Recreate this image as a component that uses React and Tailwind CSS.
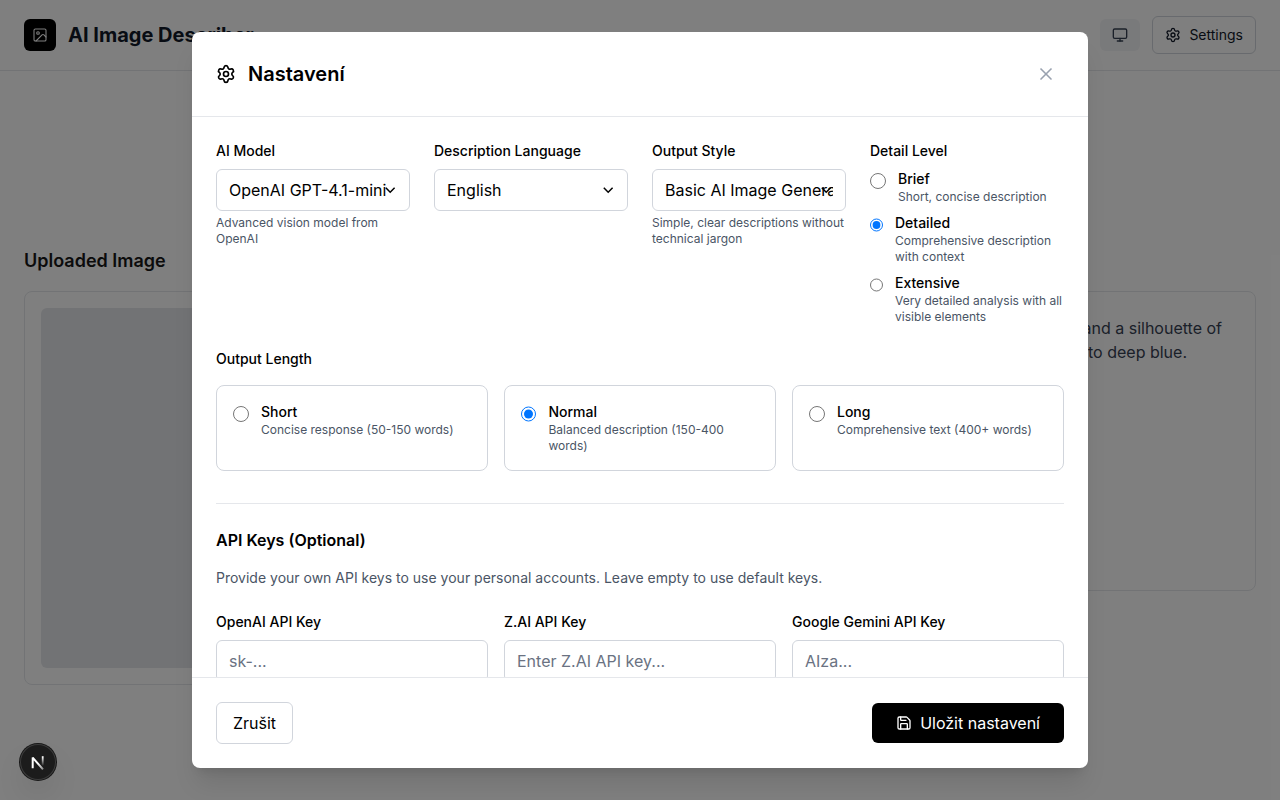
import React from "react";
import { Image, Monitor, Save, Settings, X } from "lucide-react";

const detailLevels = [
  { name: "Brief", text: "Short, concise description" },
  { name: "Detailed", text: "Comprehensive description with context", checked: true },
  { name: "Extensive", text: "Very detailed analysis with all visible elements" },
];

const lengths = [
  { name: "Short", text: "Concise response (50-150 words)" },
  { name: "Normal", text: "Balanced description (150-400 words)", checked: true },
  { name: "Long", text: "Comprehensive text (400+ words)" },
];

const keys = [
  { name: "OpenAI API Key", hint: "sk-..." },
  { name: "Z.AI API Key", hint: "Enter Z.AI API key..." },
  { name: "Google Gemini API Key", hint: "AIza..." },
];

function SelectField({ label, value, hint }) {
  return (
    <div>
      <label className="mb-2 block text-sm font-medium">{label}</label>
      <div className="relative">
        <select className="block h-[42px] w-full appearance-none rounded-md border border-gray-300 bg-white px-3 py-2 text-base">
          <option>{value}</option>
        </select>
        <svg className="pointer-events-none absolute top-[18px] right-[14px] h-[7px] w-[11px]" viewBox="0 0 11 7" fill="none">
          <path d="M0.8 0.8l4.4 4.4L9.6 0.8" stroke="#000" strokeWidth="1.5" />
        </svg>
      </div>
      {hint && <p className="mt-1 text-xs text-gray-600">{hint}</p>}
    </div>
  );
}

function RadioOption({ group, item }) {
  return (
    <>
      <input type="radio" name={group} defaultChecked={item.checked} className="mt-1 h-4 w-4" />
      <div>
        <div className="text-sm font-medium">{item.name}</div>
        <div className="text-xs text-gray-600">{item.text}</div>
      </div>
    </>
  );
}

function Page() {
  return (
    <div className="h-full bg-white">
      <header className="flex items-center justify-between border-b border-gray-200 px-6 py-4">
        <div className="flex items-center gap-3">
          <div className="flex h-8 w-8 items-center justify-center rounded-md bg-black text-white">
            <Image className="h-4 w-4" strokeWidth={1.6} />
          </div>
          <h1 className="text-xl font-bold text-gray-900">AI Image Describer</h1>
        </div>
        <div className="flex items-center gap-3">
          <button className="rounded-md bg-gray-100 px-3 py-2 text-gray-700">
            <Monitor className="h-4 w-4" />
          </button>
          <button className="flex items-center gap-2 rounded-md border border-gray-300 px-3 py-2 text-sm text-gray-900">
            <Settings className="h-4 w-4" />
            Settings
          </button>
        </div>
      </header>
      <main className="grid grid-cols-2 items-start gap-8 px-6 pt-[176px]">
        <section>
          <h2 className="mb-4 text-lg font-semibold text-[#171717]">Uploaded Image</h2>
          <div className="rounded-lg border border-gray-200 p-4">
            <div className="h-[360px] rounded-md bg-gray-200" />
          </div>
        </section>
        <section className="pt-11">
          <div className="flex h-[300px] flex-col items-end rounded-lg border border-gray-200 p-6 whitespace-nowrap text-gray-700">
            <p className="mr-[9px]">and a silhouette of</p>
            <p className="mr-[44px]">to deep blue.</p>
          </div>
        </section>
      </main>
    </div>
  );
}

function DevBadge() {
  return (
    <div className="absolute bottom-5 left-5 flex h-9 w-9 items-center justify-center rounded-full bg-[#1c1c1c] shadow-[0_0_0_1px_#171717,inset_0_0_0_1px_#3c3c3c,0_16px_32px_-8px_rgba(0,0,0,0.24)]">
      <svg className="h-9 w-9" viewBox="0 0 36 36" fill="none">
        <defs>
          <linearGradient id="stem" x1="0" y1="13" x2="0" y2="22" gradientUnits="userSpaceOnUse">
            <stop stopColor="#fff" />
            <stop offset="1" stopColor="#fff" stopOpacity="0" />
          </linearGradient>
          <linearGradient id="diag" x1="19" y1="19" x2="25" y2="27" gradientUnits="userSpaceOnUse">
            <stop stopColor="#fff" />
            <stop offset="1" stopColor="#fff" stopOpacity="0.3" />
          </linearGradient>
        </defs>
        <path d="M12.7 24.3V13.6L23 25.4" stroke="url(#diag)" strokeWidth="2" strokeLinejoin="bevel" />
        <path d="M22.7 12.2v9.4" stroke="url(#stem)" strokeWidth="1.8" />
      </svg>
    </div>
  );
}

export default function App() {
  return (
    <div className="relative h-[800px] w-full overflow-hidden bg-white font-['Inter',sans-serif] text-black antialiased">
      <Page />
      <div className="absolute inset-0 flex items-center justify-center bg-black/50">
        <div className="flex h-[736px] w-[896px] flex-col overflow-hidden rounded-lg bg-white shadow-xl">
          <div className="flex shrink-0 items-center justify-between border-b border-gray-200 p-6">
            <div className="flex items-center gap-3">
              <Settings className="h-5 w-5" />
              <h2 className="text-xl font-semibold">Nastavení</h2>
            </div>
            <button className="p-2 text-gray-400">
              <X className="h-5 w-5" />
            </button>
          </div>

          <div className="min-h-0 flex-1 overflow-hidden p-6">
            <div className="grid grid-cols-4 gap-6">
              <SelectField label="AI Model" value="OpenAI GPT-4.1-mini" hint="Advanced vision model from OpenAI" />
              <SelectField label="Description Language" value="English" />
              <SelectField label="Output Style" value="Basic AI Image Generator" hint="Simple, clear descriptions without technical jargon" />
              <div>
                <div className="mb-2 text-sm font-medium">Detail Level</div>
                <div className="space-y-2">
                  {detailLevels.map((item) => (
                    <label key={item.name} className="flex items-start gap-3">
                      <RadioOption group="detail" item={item} />
                    </label>
                  ))}
                </div>
              </div>
            </div>

            <div className="mt-6">
              <div className="mb-4 text-sm font-medium">Output Length</div>
              <div className="grid grid-cols-3 gap-4">
                {lengths.map((item) => (
                  <label key={item.name} className="flex items-start gap-3 rounded-lg border border-gray-300 p-4">
                    <RadioOption group="length" item={item} />
                  </label>
                ))}
              </div>
            </div>

            <div className="mt-8 border-t border-gray-200 pt-6">
              <h3 className="mb-4 text-base font-semibold">API Keys (Optional)</h3>
              <p className="mb-6 text-sm text-gray-600">
                Provide your own API keys to use your personal accounts. Leave empty to use default keys.
              </p>
              <div className="grid grid-cols-3 gap-4">
                {keys.map((item) => (
                  <div key={item.name}>
                    <label className="mb-2 block text-sm font-medium">{item.name}</label>
                    <input
                      type="text"
                      placeholder={item.hint}
                      className="block h-[42px] w-full rounded-md border border-gray-300 px-3 py-2 placeholder:text-gray-500"
                    />
                  </div>
                ))}
              </div>
            </div>
          </div>

          <div className="flex shrink-0 items-center justify-between border-t border-gray-200 p-6">
            <button className="rounded-md border border-gray-300 px-4 py-2">Zrušit</button>
            <button className="flex items-center gap-2 rounded-md bg-black px-6 py-2 text-white">
              <Save className="h-4 w-4" />
              Uložit nastavení
            </button>
          </div>
        </div>
      </div>
      <DevBadge />
    </div>
  );
}
